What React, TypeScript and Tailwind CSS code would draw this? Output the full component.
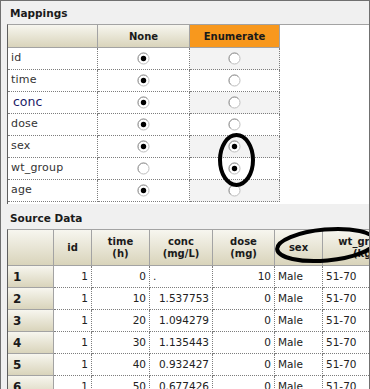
import React from "react";

type Mapping = { name: string; none: boolean; en: boolean; big?: boolean };

const mappings: Mapping[] = [
  { name: "id", none: true, en: false },
  { name: "time", none: true, en: false },
  { name: "conc", none: true, en: false, big: true },
  { name: "dose", none: true, en: false },
  { name: "sex", none: true, en: true },
  { name: "wt_group", none: false, en: true },
  { name: "age", none: true, en: false },
];

const columns = [
  { top: "id", bottom: "" },
  { top: "time", bottom: "(h)" },
  { top: "conc", bottom: "(mg/L)" },
  { top: "dose", bottom: "(mg)" },
  { top: "sex", bottom: "" },
  { top: "wt_group", bottom: "(kg)" },
];

const rows = [
  ["1", "0", ".", "10", "Male", "51-70"],
  ["1", "10", "1.537753", "0", "Male", "51-70"],
  ["1", "20", "1.094279", "0", "Male", "51-70"],
  ["1", "30", "1.135443", "0", "Male", "51-70"],
  ["1", "40", "0.932427", "0", "Male", "51-70"],
  ["1", "50", "0.677426", "0", "Male", "51-70"],
];

const Radio: React.FC<{ on: boolean }> = ({ on }) => (
  <svg width="13" height="13" viewBox="0 0 13 13">
    <circle cx="6.5" cy="6.5" r="5.5" fill="#fff" stroke="#bdbdbd" />
    <path d="M2.6 10.4 A5.5 5.5 0 0 1 10.4 2.6" fill="none" stroke="#9a9a9a" />
    {on && <circle cx="6.5" cy="6.5" r="2.7" fill="#000" />}
  </svg>
);

const headCell =
  "border-r border-b border-[#a3a3a3] bg-linear-to-b from-[#f7f6ef] to-[#d9d4bb] flex items-center justify-center font-bold text-[10px] text-[#1a1a1a]";
const bodyCell = "h-[22px] border-r border-b border-dotted border-[#7d7d7d] flex items-center";

export default function App() {
  return (
    <div className="relative w-[370px] h-[389px] overflow-hidden bg-[#f0f0f0] border-l border-t border-r border-[#707070] pl-[6px] font-['DejaVu_Sans',sans-serif] text-[#1a1a1a]">
      <div className="h-[23px] pl-[3px] pt-[6px] text-[10.5px] leading-[12px] font-bold">Mappings</div>

      <div className="h-[180px] bg-white border-t border-l border-t-[#a3a3a3] border-l-[#5e5e5e]">
        <div className="grid grid-cols-[90px_92px_90px] w-fit">
          <div className={`${headCell} h-[23px]`} />
          <div className={`${headCell} h-[23px]`}>None</div>
          <div className={`${headCell} h-[23px] bg-none bg-[#f8981d]`}>Enumerate</div>
          {mappings.map((m, i) => (
            <React.Fragment key={m.name}>
              <div
                className={`${bodyCell} ${
                  m.big ? "pl-[5px] text-[12.5px] text-[#1a1a66]" : "pl-[3px] text-[11px] text-[#333] tracking-[0.2px]"
                }`}
              >
                {m.name}
              </div>
              <div className={`${bodyCell} justify-center`}>
                <Radio on={m.none} />
              </div>
              <div className={`${bodyCell} justify-center ${i % 2 === 0 ? "bg-[#f3f3f3]" : "bg-white"}`}>
                <Radio on={m.en} />
              </div>
            </React.Fragment>
          ))}
        </div>
      </div>

      <div className="h-[25px] pl-[3px] pt-[8px] text-[10.5px] leading-[12px] font-bold">Source Data</div>

      <div className="border-t border-l border-t-[#a3a3a3] border-l-[#5e5e5e] bg-white w-fit">
        <div className="grid grid-cols-[46px_38px_58px_63px_62px_48px_84px] w-fit">
          <div className={`${headCell} h-[36px]`} />
          {columns.map((c) => (
            <div key={c.top} className={`${headCell} h-[36px] flex-col leading-[12px] text-center`}>
              <span>{c.top}</span>
              {c.bottom && <span>{c.bottom}</span>}
            </div>
          ))}
          {rows.map((r, i) => (
            <React.Fragment key={i}>
              <div className={`${headCell} h-[22px] justify-start pl-[5px] text-[12px]`}>{i + 1}</div>
              {r.map((v, j) => {
                const left = j >= 4 || v === ".";
                return (
                  <div
                    key={j}
                    className={`${bodyCell} text-[10.5px] text-[#222] ${
                      left ? "justify-start pl-[3px]" : "justify-end pr-[3px]"
                    }`}
                  >
                    {v}
                  </div>
                );
              })}
            </React.Fragment>
          ))}
        </div>
      </div>

      <svg className="absolute left-0 top-0 pointer-events-none" width="370" height="389">
        <ellipse cx="235.5" cy="159" rx="16.5" ry="25" fill="none" stroke="#000" strokeWidth="4" />
        <ellipse
          cx="325"
          cy="244"
          rx="49"
          ry="15.5"
          fill="none"
          stroke="#000"
          strokeWidth="4"
          transform="rotate(-5 325 244)"
        />
      </svg>
    </div>
  );
}
